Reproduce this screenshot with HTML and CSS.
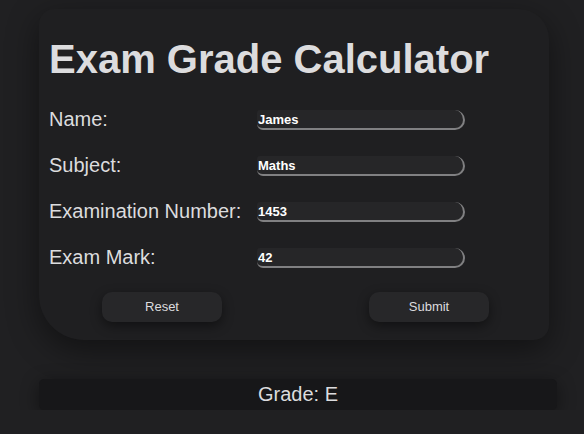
FILE: index.html
```html
<!DOCTYPE html>
<html>
<head>
<meta charset="utf-8">
<link rel="stylesheet" href="styles.css">
</head>
<body>
<div class="page">
  <form class="card">
    <h1 class="title">Exam Grade Calculator</h1>
    <div class="fields">
      <label class="label" for="name">Name:</label>
      <input class="field" id="name" type="text" value="James">
      <label class="label" for="subject">Subject:</label>
      <input class="field" id="subject" type="text" value="Maths">
      <label class="label" for="num">Examination Number:</label>
      <input class="field" id="num" type="text" value="1453">
      <label class="label" for="mark">Exam Mark:</label>
      <input class="field" id="mark" type="text" value="42">
    </div>
    <div class="actions">
      <button class="btn" type="button">Reset</button>
      <button class="btn" type="button">Submit</button>
    </div>
  </form>
  <div class="result">Grade: E</div>
</div>
</body>
</html>
```

FILE: styles.css
```css
html, body {
  margin: 0;
  padding: 0;
  background: #202022;
  font-family: "Liberation Sans", Arial, sans-serif;
  color: #dcdcde;
}

.page {
  padding: 9px 0 0 39px;
}

.card {
  width: 510px;
  box-sizing: border-box;
  background: #1f1f21;
  border-radius: 15px 30px 15px 45px;
  padding: 27px 9px 18px 10px;
  box-shadow: 0 10px 32px rgba(0, 0, 0, 0.45);
}

.title {
  margin: 0;
  font-size: 40px;
  font-weight: bold;
  line-height: 46px;
  color: #dcdcde;
}

.fields {
  margin-top: 26px;
  display: grid;
  grid-template-columns: 208px 208px;
  row-gap: 23px;
  align-items: center;
}

.label {
  font-size: 20px;
  line-height: 23px;
  color: #dcdcde;
}

.field {
  box-sizing: border-box;
  width: 208px;
  height: 20px;
  margin: 0;
  padding: 1px 1px 0 1px;
  background: #262628;
  border: none;
  border-bottom: 2px solid #808082;
  border-right: 2px solid #808082;
  border-radius: 3px 10px 10px 6px;
  color: #ffffff;
  font-family: "Liberation Sans", Arial, sans-serif;
  font-size: 13px;
  font-weight: bold;
  outline: none;
}

.actions {
  margin-top: 23px;
  display: flex;
  justify-content: space-between;
  padding: 0 51px 0 53px;
}

.btn {
  width: 120px;
  height: 30px;
  padding: 0 0 1px 0;
  border: none;
  border-radius: 10px;
  background: #272729;
  color: #dcdcde;
  font-family: "Liberation Sans", Arial, sans-serif;
  font-size: 13px;
  box-shadow: 0 4px 12px rgba(0, 0, 0, 0.45);
}

.result {
  margin-top: 39px;
  width: 518px;
  height: 31px;
  box-sizing: border-box;
  background: #171719;
  border-radius: 5px;
  display: flex;
  align-items: center;
  justify-content: center;
  font-size: 20px;
  color: #dcdcde;
  box-shadow: 0 4px 18px rgba(0, 0, 0, 0.45);
}
```
